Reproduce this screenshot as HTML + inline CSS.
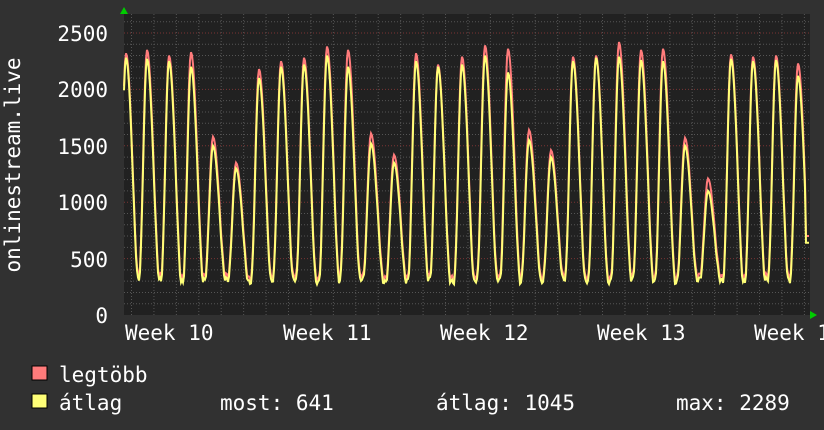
<!DOCTYPE html>
<html><head><meta charset="utf-8">
<style>
html,body{margin:0;padding:0;background:#313131;}
svg{display:block}
text{font-family:"DejaVu Sans Mono","Liberation Mono",monospace;fill:#fff;font-size:21px}
</style></head>
<body>
<svg id="g" width="824" height="430" xmlns="http://www.w3.org/2000/svg">
<rect width="824" height="430" fill="#313131"/>
<rect x="124" y="14" width="686" height="301" fill="#212121"/>
<g id="grid"></g>
<path id="mx" fill="none" stroke="#ff7b7b" stroke-width="2"/>
<path id="av" fill="none" stroke="#ffff77" stroke-width="2"/>
<polygon points="120,14 128,14 124,7" fill="#0c0"/>
<polygon points="810,311 810,319 817,315" fill="#0c0"/>
<g text-anchor="end">
<text x="108" y="41">2500</text>
<text x="108" y="97">2000</text>
<text x="108" y="154">1500</text>
<text x="108" y="210">1000</text>
<text x="108" y="267">500</text>
<text x="108" y="323">0</text>
</g>
<text transform="translate(20,165) rotate(-90)" text-anchor="middle">onlinestream.live</text>
<text x="125" y="340">Week 10</text>
<text x="283" y="340">Week 11</text>
<text x="440" y="340">Week 12</text>
<text x="597" y="340">Week 13</text>
<text x="754" y="340">Week 14</text>
<rect x="32" y="366" width="15" height="14" fill="#ff7b7b" stroke="#000"/>
<rect x="32" y="394" width="15" height="14" fill="#ffff77" stroke="#000"/>
<text x="59" y="382">legtöbb</text>
<text x="59" y="410">átlag</text>
<text x="220" y="410">most: 641</text>
<text x="436" y="410">átlag: 1045</text>
<text x="676" y="410">max: 2289</text>
</svg>
<script>
var g=document.getElementById('grid'),h='';
function Y(v){return 315-v*0.1128;}
for(var v=100;v<=2700;v+=100){var y=Y(v);if(y<14)break;var maj=v%500==0;
h+='<line x1="124" x2="810" y1="'+y+'" y2="'+y+'" stroke="'+(maj?'#7a3434':'#555')+'" stroke-dasharray="1,2"/>';}
for(var x=131.5;x<810;x+=22.43){var m=((x-249)%157+157)%157;var wk=m<3||m>154;
h+='<line y1="14" y2="315" x1="'+x+'" x2="'+x+'" stroke="'+(wk?'#7a3434':'#555')+'" stroke-dasharray="1,2"/>';}
g.innerHTML=h;
var pk=[[126,2320,2280],[147,2350,2270],[169,2300,2250],[191,2330,2200],[213,1580,1500],[236,1350,1300],[259,2180,2100],[281,2250,2200],[304,2280,2220],[327,2380,2300],[348,2350,2200],[371,1610,1520],[394,1420,1350],[416,2320,2250],[438,2220,2200],[462,2290,2220],[485,2390,2300],[508,2360,2150],[529,1640,1550],[551,1460,1400],[573,2290,2250],[596,2300,2280],[619,2420,2290],[641,2350,2260],[663,2360,2250],[685,1570,1500],[708,1210,1100],[731,2310,2270],[753,2290,2250],[776,2300,2260],[798,2230,2120],[820,2200,2100]];
function val(x,k,base){var best=base;for(var i=0;i<pk.length;i++){var d=x-pk[i][0];var W=d<0?8:12;
if(Math.abs(d)>=W)continue;var c=Math.cos(Math.PI*d/(2*W));var f=d<0?c*c:Math.pow(c,1.6);
var v=base+(pk[i][k]-base)*f;if(v>best)best=v;}return best;}
var a='',b='';
for(var x=124;x<=809;x+=1){var n=Math.sin(x*1.7)*20+Math.sin(x*0.37)*15;
var vm=val(x,1,340+n),va=val(x,2,305+n);if(x>=806){vm=700;va=641;}
a+=(x==124?'M':'L')+x+','+Y(vm).toFixed(1);b+=(x==124?'M':'L')+x+','+Y(va).toFixed(1);}
document.getElementById('mx').setAttribute('d',a);document.getElementById('av').setAttribute('d',b);
</script>
</body></html>
